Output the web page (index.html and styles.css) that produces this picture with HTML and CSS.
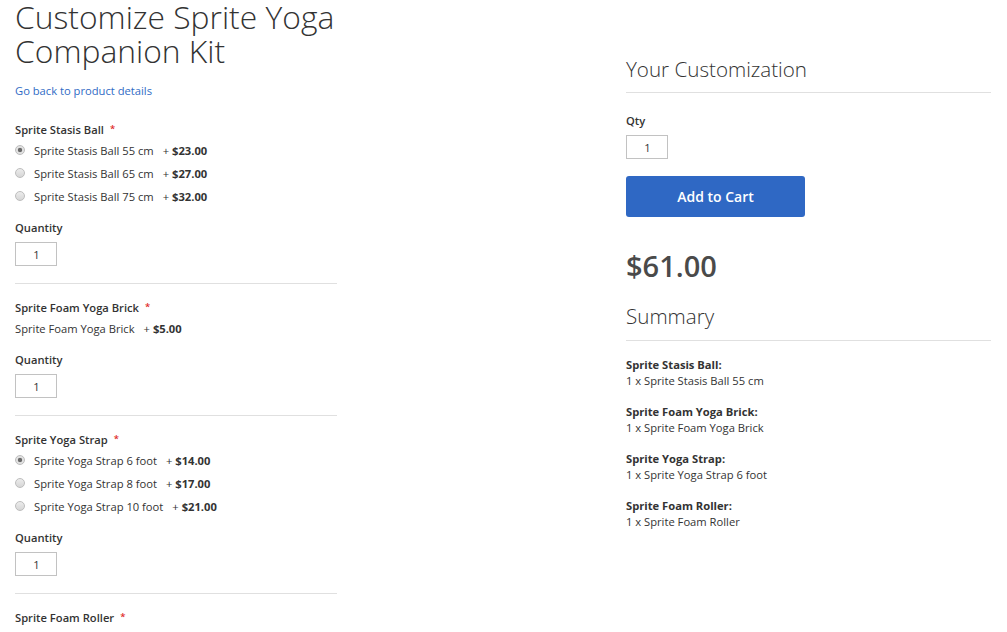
FILE: index.html
```html
<!DOCTYPE html>
<html lang="en">
<head>
<meta charset="utf-8">
<title>Customize Sprite Yoga Companion Kit</title>
<link rel="stylesheet" href="styles.css">
</head>
<body>
<div class="page">
  <main class="options-col">
    <h1 class="page-title">Customize Sprite Yoga Companion Kit</h1>
    <a class="back-link" href="#">Go back to product details</a>

    <section class="option">
      <div class="option-label required">Sprite Stasis Ball</div>
      <div class="choices">
        <label class="choice"><input class="radio" type="radio" name="ball" checked><span class="choice-name">Sprite Stasis Ball 55 cm</span><span class="price">+ <b>$23.00</b></span></label>
        <label class="choice"><input class="radio" type="radio" name="ball"><span class="choice-name">Sprite Stasis Ball 65 cm</span><span class="price">+ <b>$27.00</b></span></label>
        <label class="choice"><input class="radio" type="radio" name="ball"><span class="choice-name">Sprite Stasis Ball 75 cm</span><span class="price">+ <b>$32.00</b></span></label>
      </div>
      <div class="qty-label">Quantity</div>
      <input class="qty-input" type="text" value="1">
    </section>

    <section class="option">
      <div class="option-label required">Sprite Foam Yoga Brick</div>
      <div class="choices">
        <div class="choice single"><span class="choice-name">Sprite Foam Yoga Brick</span><span class="price">+ <b>$5.00</b></span></div>
      </div>
      <div class="qty-label">Quantity</div>
      <input class="qty-input" type="text" value="1">
    </section>

    <section class="option">
      <div class="option-label required">Sprite Yoga Strap</div>
      <div class="choices">
        <label class="choice"><input class="radio" type="radio" name="strap" checked><span class="choice-name">Sprite Yoga Strap 6 foot</span><span class="price">+ <b>$14.00</b></span></label>
        <label class="choice"><input class="radio" type="radio" name="strap"><span class="choice-name">Sprite Yoga Strap 8 foot</span><span class="price">+ <b>$17.00</b></span></label>
        <label class="choice"><input class="radio" type="radio" name="strap"><span class="choice-name">Sprite Yoga Strap 10 foot</span><span class="price">+ <b>$21.00</b></span></label>
      </div>
      <div class="qty-label">Quantity</div>
      <input class="qty-input" type="text" value="1">
    </section>

    <section class="option">
      <div class="option-label required">Sprite Foam Roller</div>
    </section>
  </main>

  <aside class="summary-col">
    <h2 class="block-title">Your Customization</h2>
    <div class="qty-label cart-qty">Qty</div>
    <input class="qty-input" type="text" value="1">
    <button class="add-to-cart" type="button">Add to Cart</button>
    <div class="total-price">$61.00</div>
    <h2 class="block-title summary-title">Summary</h2>
    <ul class="summary-list">
      <li><strong>Sprite Stasis Ball:</strong><span>1 x Sprite Stasis Ball 55 cm</span></li>
      <li><strong>Sprite Foam Yoga Brick:</strong><span>1 x Sprite Foam Yoga Brick</span></li>
      <li><strong>Sprite Yoga Strap:</strong><span>1 x Sprite Yoga Strap 6 foot</span></li>
      <li><strong>Sprite Foam Roller:</strong><span>1 x Sprite Foam Roller</span></li>
    </ul>
  </aside>
</div>
</body>
</html>
```

FILE: styles.css
```css
* { box-sizing: border-box; }

html, body {
  margin: 0;
  padding: 0;
  background: #fff;
}

body {
  font-family: "Open Sans", "Liberation Sans", sans-serif;
  font-size: 11.2px;
  line-height: 16px;
  color: #333;
  overflow: hidden;
}

.page {
  display: grid;
  grid-template-columns: 322px 365px;
  column-gap: 289px;
  padding: 0 16px 0 15px;
  align-items: start;
}

/* Left column */
.options-col {
  display: flex;
  flex-direction: column;
}

.page-title {
  margin: 0;
  font-size: 31.8px;
  line-height: 34px;
  font-weight: 300;
  color: #333;
}

.back-link {
  margin-top: 15px;
  color: #306bc5;
  text-decoration: none;
  align-self: flex-start;
}

.option {
  display: flex;
  flex-direction: column;
  align-items: flex-start;
  padding: 16px 0 17px;
  border-bottom: 1px solid #e0e0e0;
}

.option:first-of-type {
  padding-top: 23px;
}

.option:last-of-type {
  border-bottom: 0;
}

.option-label {
  font-weight: 600;
}

.required::after {
  content: "*";
  color: #e02b27;
  font-size: 9.5px;
  margin-left: 6px;
  vertical-align: top;
  line-height: 14px;
}

.choices {
  display: flex;
  flex-direction: column;
  gap: 7px;
  margin-top: 5px;
}

.choice {
  display: flex;
  align-items: center;
  height: 16px;
}

.radio {
  appearance: none;
  -webkit-appearance: none;
  width: 10px;
  height: 10px;
  margin: -3px 9px 0 0;
  border-radius: 50%;
  border: 1px solid #bdbdbd;
  background: linear-gradient(#ececec, #d6d6d6);
  flex: none;
}

.radio:checked {
  background: radial-gradient(circle, #6a6a6a 0 1.8px, #e2e2e2 2.6px);
}

.price {
  margin-left: 9px;
}

.price b {
  font-weight: 700;
}

.qty-label {
  margin-top: 15px;
  font-weight: 600;
}

.qty-input {
  width: 42px;
  height: 24px;
  margin-top: 6px;
  border: 1px solid #c2c2c2;
  padding: 0 0 0 1px;
  font: inherit;
  color: #333;
  text-align: center;
  background: #fff;
}

/* Right column */
.summary-col {
  display: flex;
  flex-direction: column;
  align-items: flex-start;
}

.block-title {
  align-self: stretch;
  margin: 58px 0 0;
  padding-bottom: 12px;
  border-bottom: 1px solid #e0e0e0;
  font-size: 20.6px;
  line-height: 22px;
  font-weight: 300;
  color: #333;
}

.cart-qty {
  margin-top: 20px;
}

.add-to-cart {
  margin-top: 17px;
  width: 179px;
  height: 41px;
  border: 0;
  border-radius: 3px;
  background: #2f68c4;
  color: #fff;
  font-family: inherit;
  font-size: 14px;
  font-weight: 600;
  cursor: pointer;
}

.total-price {
  margin-top: 31px;
  font-size: 29px;
  line-height: 35px;
  font-weight: 600;
  color: #4a4a4a;
}

.summary-title {
  margin-top: 22px;
  padding-bottom: 13px;
}

.summary-list {
  list-style: none;
  margin: 16px 0 0;
  padding: 0;
  display: flex;
  flex-direction: column;
  gap: 15px;
}

.summary-list li {
  display: flex;
  flex-direction: column;
}

.summary-list strong {
  font-weight: 700;
}
```
